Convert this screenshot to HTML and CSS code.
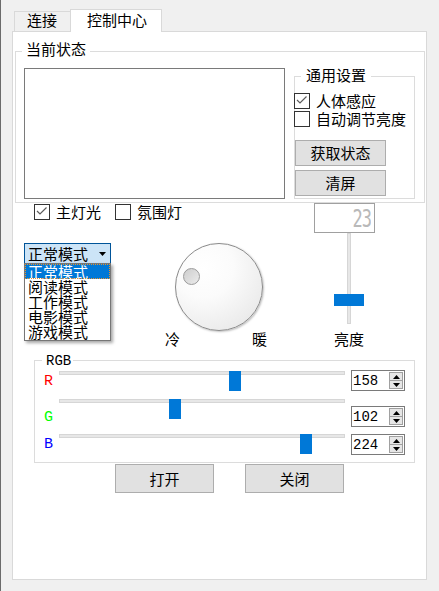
FILE: index.html
```html
<!DOCTYPE html>
<html lang="zh-CN">
<head>
<meta charset="utf-8">
<title>控制中心</title>
<link rel="stylesheet" href="styles.css">
</head>
<body>
<div class="window">
  <div class="tabbar">
    <div class="tab">连接</div>
    <div class="tab active">控制中心</div>
  </div>
  <div class="pane">
    <fieldset class="group status">
      <legend>当前状态</legend>
      <div class="status-row">
        <div class="textedit"></div>
        <fieldset class="group general">
          <legend>通用设置</legend>
          <label class="check"><span class="box"><svg width="14" height="14" viewBox="0 0 14 14"><polyline points="2,6 5,9 11.5,2.5" fill="none" stroke="#5c5c5c" stroke-width="1.2"/></svg></span><span>人体感应</span></label>
          <label class="check"><span class="box"></span><span>自动调节亮度</span></label>
          <button class="btn side first">获取状态</button>
          <button class="btn side">清屏</button>
        </fieldset>
      </div>
    </fieldset>

    <div class="middle">
      <div class="mid-left">
        <div class="check-row">
          <label class="check"><span class="box"><svg width="14" height="14" viewBox="0 0 14 14"><polyline points="2,6 5,9 11.5,2.5" fill="none" stroke="#5c5c5c" stroke-width="1.2"/></svg></span><span>主灯光</span></label>
          <label class="check second"><span class="box"></span><span>氛围灯</span></label>
        </div>
        <div class="mode-row">
          <div class="combo">
            <span class="combo-text">正常模式</span>
            <svg class="combo-arrow" width="7" height="4" viewBox="0 0 7 4"><polygon points="0,0 7,0 3.5,4" fill="#000"/></svg>
            <ul class="popup">
              <li class="sel">正常模式</li>
              <li>阅读模式</li>
              <li>工作模式</li>
              <li>电影模式</li>
              <li>游戏模式</li>
            </ul>
          </div>
          <div class="dial-block">
            <div class="dial"><span class="dial-dot"></span></div>
            <div class="dial-labels"><span>冷</span><span>暖</span></div>
          </div>
        </div>
      </div>
      <div class="mid-right">
        <div class="lcd"><span class="lcd-num">23</span></div>
        <div class="vslider">
          <span class="vgroove"></span>
          <span class="vhandle" style="top: calc((100% - 12px) * 0.768)"></span>
        </div>
        <div class="vlabel">亮度</div>
      </div>
    </div>

    <fieldset class="group rgb">
      <legend>RGB</legend>
      <div class="rgb-row">
        <div class="rgb-labels">
          <span class="lbl r">R</span>
          <span class="lbl g">G</span>
          <span class="lbl b">B</span>
        </div>
        <div class="rgb-sliders">
          <div class="hslider sr"><span class="hgroove"></span><span class="hhandle" style="left: calc((100% - 12px) * 0.62)"></span></div>
          <div class="hslider sg"><span class="hgroove"></span><span class="hhandle" style="left: calc((100% - 12px) * 0.40)"></span></div>
          <div class="hslider sb"><span class="hgroove"></span><span class="hhandle" style="left: calc((100% - 12px) * 0.878)"></span></div>
        </div>
        <div class="rgb-spins">
          <div class="spin pr"><span class="spin-val">158</span><span class="spin-btns"><span class="spin-up"><svg width="7" height="4" viewBox="0 0 7 4"><polygon points="0,4 7,4 3.5,0" fill="#000"/></svg></span><span class="spin-down"><svg width="7" height="4" viewBox="0 0 7 4"><polygon points="0,0 7,0 3.5,4" fill="#000"/></svg></span></span></div>
          <div class="spin pg"><span class="spin-val">102</span><span class="spin-btns"><span class="spin-up"><svg width="7" height="4" viewBox="0 0 7 4"><polygon points="0,4 7,4 3.5,0" fill="#000"/></svg></span><span class="spin-down"><svg width="7" height="4" viewBox="0 0 7 4"><polygon points="0,0 7,0 3.5,4" fill="#000"/></svg></span></span></div>
          <div class="spin pb"><span class="spin-val">224</span><span class="spin-btns"><span class="spin-up"><svg width="7" height="4" viewBox="0 0 7 4"><polygon points="0,4 7,4 3.5,0" fill="#000"/></svg></span><span class="spin-down"><svg width="7" height="4" viewBox="0 0 7 4"><polygon points="0,0 7,0 3.5,4" fill="#000"/></svg></span></span></div>
        </div>
      </div>
    </fieldset>

    <div class="actions">
      <button class="btn big">打开</button>
      <button class="btn big">关闭</button>
    </div>
  </div>
</div>
</body>
</html>
```

FILE: styles.css
```css
* { box-sizing: border-box; }
html, body { margin: 0; padding: 0; }
body {
  background: #f0f0f0;
  font-family: "Noto Sans CJK SC", "Noto Sans", sans-serif;
  font-size: 15px;
  line-height: 16px;
  color: #000;
  width: 439px;
  height: 591px;
  overflow: hidden;
}
.window {
  height: 591px;
  border-left: 1px solid #6b6b6b;
  padding: 9px 0 0 11px;
}

/* tabs */
.tabbar {
  display: flex;
  align-items: flex-end;
  margin-left: 2px;
  margin-bottom: -1px;
  position: relative;
  z-index: 1;
}
.tab {
  border: 1px solid #d9d9d9;
  border-bottom: none;
  background: #f0f0f0;
  padding: 0 13px 3px 12px;
  margin-bottom: 1px;
  border-right: none;
}
.tab.active {
  background: #fff;
  padding: 2px 14px 4px 16px;
  margin-bottom: 0;
  border-right: 1px solid #d9d9d9;
}
.pane {
  width: 415px;
  height: 549px;
  background: #fff;
  border: 1px solid #d9d9d9;
}

/* group boxes */
fieldset {
  margin: 0;
  padding: 0;
  border: 1px solid #dcdcdc;
  min-width: 0;
}
legend { padding: 0; }

.status {
  margin: 9px 1px 0 2px;
  padding-bottom: 3px;
}
.status > legend {
  margin-left: 6px;
  padding: 0 4px 5px 4px;
}
.status-row {
  display: flex;
  align-items: flex-start;
  margin: 5px 0 0 8px;
}
.textedit {
  width: 261px;
  height: 131px;
  margin-top: 1px;
  border: 1px solid #7a7a7a;
  background: #fff;
}
.general {
  width: 121px;
  margin-left: 9px;
  padding-bottom: 2px;
}
.general > legend {
  margin-left: 6px;
  padding: 0 5px 3px 5px;
}
.general .check { margin-left: -1px; }
.general .check:first-of-type { margin-top: 6px; }

/* checkbox */
.check {
  display: flex;
  align-items: center;
  height: 18px;
}
.box {
  width: 16px;
  height: 16px;
  border: 1px solid #333;
  background: #fff;
  margin-right: 6px;
  flex: none;
}
.box svg { display: block; }

/* buttons */
.btn {
  font: inherit;
  color: #000;
  background: #e1e1e1;
  border: 1px solid #adadad;
  padding: 0;
  margin: 0;
  display: block;
}
.btn.side {
  width: 91px;
  height: 26px;
  margin-top: 4px;
}
.btn.side.first { margin-top: 12px; }

/* middle area */
.middle {
  display: flex;
  align-items: flex-start;
}
.mid-left {
  width: 290px;
  margin-left: 11px;
}
.check-row {
  display: flex;
  padding-left: 10px;
}
.check-row .second { margin-left: 14px; }
.mode-row {
  display: flex;
  align-items: flex-start;
  margin-top: 22px;
}
.combo {
  position: relative;
  width: 87px;
  height: 21px;
  background: #cce4f7;
  border: 1px solid #005499;
  display: flex;
  align-items: flex-start;
  padding: 2px 0 0 3px;
}
.combo-arrow {
  margin: 6px 4px 0 auto;
  display: block;
}
.popup {
  position: absolute;
  top: 19px;
  left: -1px;
  width: 87px;
  margin: 0;
  padding: 0 0 1px 0;
  list-style: none;
  background: #fff;
  border: 1px solid #767676;
  box-shadow: 2px 2px 3px rgba(0, 0, 0, 0.35);
}
.popup li {
  line-height: 15px;
  height: 15px;
  padding-left: 3px;
}
.popup li.sel {
  background: #0078d7;
  color: #fff;
  outline: 1px dotted #e8922d;
  outline-offset: -1px;
}
.dial-block {
  width: 102px;
  margin-left: 54px;
}
.dial {
  position: relative;
  width: 88px;
  height: 88px;
  margin-left: 10px;
  border-radius: 50%;
  border: 1px solid #8a8a8a;
  background: radial-gradient(circle at 32% 28%, #ffffff 0%, #fbfbfb 35%, #ececec 75%, #e2e2e2 92%, #f2f2f2 100%);
  box-shadow: 1px 1px 2px rgba(0, 0, 0, 0.25);
}
.dial-dot {
  position: absolute;
  left: 7px;
  top: 24px;
  width: 17px;
  height: 17px;
  border-radius: 50%;
  border: 1px solid #9a9a9a;
  background: linear-gradient(135deg, #cdcdcd 0%, #dcdcdc 50%, #ececec 100%);
}
.dial-labels {
  display: flex;
  justify-content: space-between;
}

.mid-right {
  width: 61px;
}
.lcd {
  height: 30px;
  border: 1px solid #a0a0a0;
  background: #fff;
  display: flex;
  justify-content: flex-end;
  align-items: center;
  padding-right: 3px;
}
.lcd-num {
  display: inline-block;
  font-family: "DejaVu Sans Mono", monospace;
  font-size: 17px;
  line-height: 14px;
  letter-spacing: -1px;
  color: #b9b9b9;
  transform: scaleY(1.5);
}
.vslider {
  position: relative;
  width: 30px;
  height: 91px;
  margin-left: 20px;
}
.vgroove {
  display: block;
  width: 4px;
  height: 100%;
  margin: 0 auto;
  background: #e7e7e7;
  border: 1px solid #d6d6d6;
}
.vhandle {
  position: absolute;
  left: 0;
  width: 30px;
  height: 12px;
  background: #0078d7;
}
.vlabel {
  margin: 7px 0 0 20px;
}

/* RGB */
.rgb {
  margin: 6px 11px 0 21px;
  padding-bottom: 7px;
}
.rgb > legend {
  margin-left: 7px;
  padding: 2px 2px 0 4px;
  font-family: "Liberation Mono", monospace;
  font-size: 14px;
  line-height: 13px;
}
.rgb-row {
  display: flex;
  align-items: flex-start;
  padding-left: 9px;
}
.rgb-labels {
  width: 15px;
  display: flex;
  flex-direction: column;
  font-family: "Liberation Mono", monospace;
  font-size: 15px;
  line-height: 16px;
}
.lbl.r { color: #ff0000; margin-top: 6px; }
.lbl.g { color: #00ff00; margin-top: 20px; }
.lbl.b { color: #0000ff; margin-top: 11px; }
.rgb-sliders {
  width: 286px;
  margin-top: -5px;
}
.hslider {
  position: relative;
  height: 20px;
}
.hslider.sg { margin-top: 8px; }
.hslider.sb { margin-top: 15px; }
.hgroove {
  display: block;
  height: 4px;
  margin-top: 8px;
  background: #e7e7e7;
  border: 1px solid #d6d6d6;
}
.hhandle {
  position: absolute;
  top: 0;
  width: 12px;
  height: 20px;
  background: #0078d7;
}
.rgb-spins {
  width: 54px;
  margin-left: 6px;
}
.spin {
  display: flex;
  align-items: center;
  height: 21px;
  border: 1px solid #7a7a7a;
  background: #fff;
}
.spin.pr { margin-top: 2px; }
.spin.pg { margin-top: 15px; }
.spin.pb { margin-top: 7px; }
.spin-val {
  flex: 1;
  padding-left: 1px;
  font-family: "Liberation Mono", monospace;
  font-size: 14px;
  line-height: 16px;
}
.spin-btns {
  display: flex;
  flex-direction: column;
  width: 14px;
  height: 17px;
  margin-right: 1px;
  border: 1px solid #a0a0a0;
  background: #e6e6e6;
}
.spin-up, .spin-down {
  flex: 1;
  display: flex;
  align-items: center;
  justify-content: center;
}
.spin-up { border-bottom: 1px solid #a0a0a0; }
.spin-btns svg { display: block; }

/* bottom buttons */
.actions {
  display: flex;
  gap: 31px;
  margin-top: 1px;
  padding-left: 102px;
}
.btn.big {
  width: 99px;
  height: 29px;
}
```
